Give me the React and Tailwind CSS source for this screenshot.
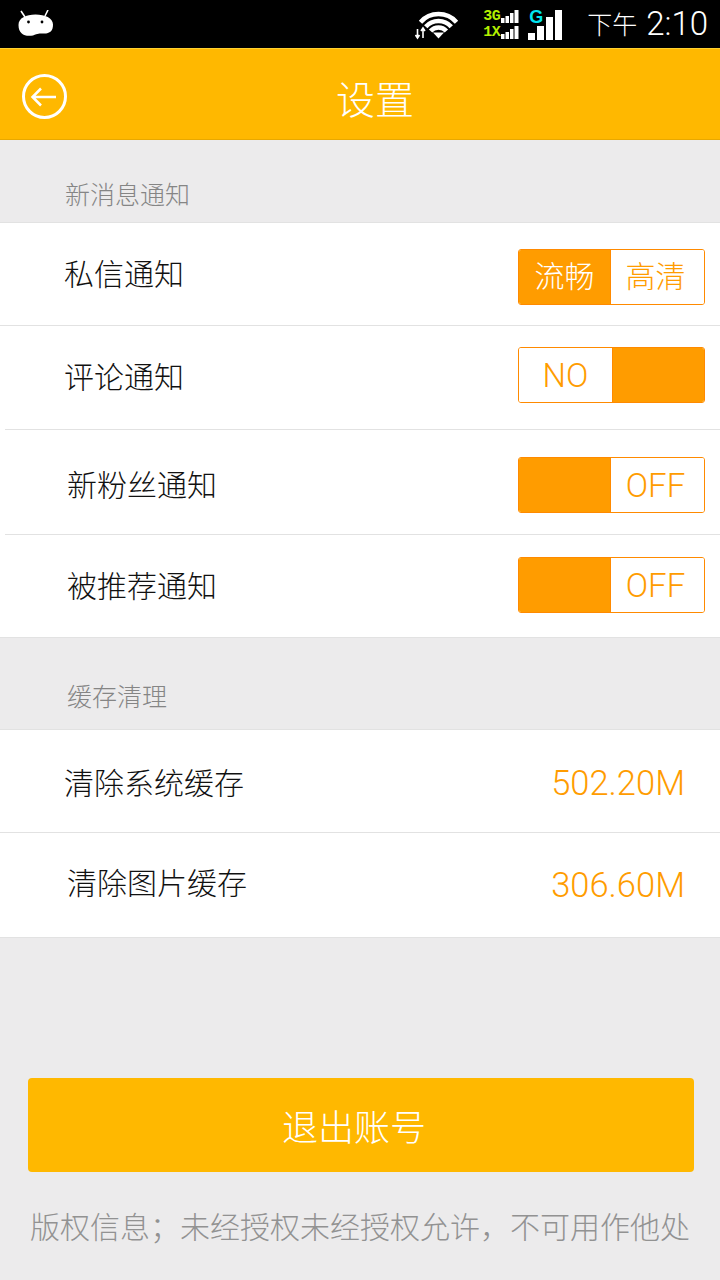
import React from 'react';

const cjk = { fontFamily: '"Noto Sans CJK SC", "Liberation Sans", sans-serif' };
const thin = { fontFamily: 'Roboto, sans-serif', fontWeight: 300 };

function Toggle({ left, right, on, latin, className = '' }) {
  const txt = latin ? 'text-[33px] pt-[2px]' : 'text-[30px] pb-[5px]';
  return (
    <div className={`flex w-[187px] h-[56px] rounded-[3px] border border-[#ff8a00] overflow-hidden font-light ${className}`} style={latin ? thin : undefined}>
      {on === 'left' ? (
        <>
          <div className={`w-[92px] flex items-center justify-center bg-[#ff9c00] text-white border-r border-[#ff8a00] ${txt}`}>{left}</div>
          <div className={`flex-1 flex items-center justify-center bg-white text-[#ff9c00] pr-[4px] ${txt}`}>{right}</div>
        </>
      ) : (
        <>
          <div className={`w-[94px] flex items-center justify-center bg-white text-[#ff9c00] border-r border-[#ff8a00] ${txt}`}>{left}</div>
          <div className="flex-1 bg-[#ff9c00]">{right}</div>
        </>
      )}
    </div>
  );
}

function Row({ label, pl, h, labelClass = '', inset, children }) {
  return (
    <div className={`relative bg-white flex items-center justify-between pr-[15px] ${pl} ${h} ${inset ? '' : 'border-b border-[#e2e2e2]'}`}>
      <span className={`text-[30px] font-light text-[#111] ${labelClass}`}>{label}</span>
      {children}
      {inset && <div className="absolute bottom-0 left-[5px] right-0 h-px bg-[#e2e2e2]" />}
    </div>
  );
}

function SectionTitle({ title, cls }) {
  return (
    <div className={`flex items-end border-b border-[#e2e2e2] ${cls}`}>
      <span className="text-[25px] leading-[32px] font-light text-[#858585]">{title}</span>
    </div>
  );
}

function StatusBar() {
  return (
    <div className="h-[48px] bg-black flex items-center">
      {/* android 头像 */}
      <svg className="ml-[18px]" width="36" height="28" viewBox="0 0 36 28">
        <path d="M3 1 L7 7 M30 0 L27 6" stroke="#fff" strokeWidth="1.6" />
        <path d="M0.500 15 C0.500 8 8 4.500 17.500 4.500 C27 4.500 35 8 35 14.500 C35 21 32 23.500 26 23.500 C21 23.500 20 23.500 15 25.500 C7 27 0.500 24 0.500 15 Z" fill="#fff" />
        <circle cx="10.500" cy="12" r="1.400" fill="#000" />
        <circle cx="24" cy="12" r="1.400" fill="#000" />
      </svg>
      <div className="ml-auto flex items-center h-full">
        <svg width="44" height="30" viewBox="0 0 44 30" className="mt-[2px]">
          <g fill="none" stroke="#fff" strokeWidth="4.500">
            <path d="M5.500 12.200 A24 24 0 0 1 41.500 12.200" />
            <path d="M10.750 16.800 A17 17 0 0 1 36.250 16.800" />
            <path d="M15.600 21 A10.500 10.500 0 0 1 31.400 21" />
          </g>
          <path d="M18 22.500 L29 22.500 L23.500 28.500 Z" fill="#fff" />
          <path d="M2.500 19 V28 M0.500 25 L2.500 28 L4.500 25 M8 18 V28 M6 21 L8 18 L10 21" fill="none" stroke="#fff" strokeWidth="1.600" />
        </svg>
        <div className="flex flex-col w-[36px] h-[30px] ml-[24px] justify-between">
          {['3G', '1X'].map(t => (
            <div key={t} className="flex items-end h-[14px]">
              <span className="text-[15px] leading-[14px] font-bold tracking-[-0.5px] text-[#b4f000] w-[18px] translate-y-[1px]" style={{ fontFamily: '"Liberation Mono", monospace' }}>{t}</span>
              <svg width="18" height="14" viewBox="0 0 18 14">
                <path d="M0 9h3.500v5H0zM4.500 7h3.500v7H4.500zM9 4h3.500v10H9zM13.500 1h4v13h-4z" fill="#fff" />
              </svg>
            </div>
          ))}
        </div>
        <div className="relative w-[34px] h-[30px] ml-[9px] mt-[2px]">
          <span className="absolute left-[1px] top-[-2px] text-[18px] leading-[18px] font-bold text-[#00e6f0]" style={{ fontFamily: '"Liberation Sans", sans-serif' }}>G</span>
          <svg className="absolute left-0 top-0" width="34" height="30" viewBox="0 0 34 30">
            <path d="M0 23h7v7H0zM9 16h7v14H9zM18 7h7v23h-7zM27 0h7v30h-7z" fill="#fff" />
          </svg>
        </div>
        <span className="text-[25px] font-light text-white ml-[25px] mr-[9px]" style={cjk}>下午</span>
        <span className="text-[33px] text-white mr-[12px]" style={thin}>2:10</span>
      </div>
    </div>
  );
}

export default function App() {
  return (
    <div className="w-[720px] h-[1280px] bg-[#ecebec] overflow-hidden" style={cjk}>
      <StatusBar />

      <div className="relative h-[92px] bg-[#ffb800] border-t border-b border-t-[#ffd230] border-b-[#e8a800] flex items-center justify-center">
        <svg className="absolute left-[22px] top-[25px]" width="46" height="46" viewBox="0 0 46 46" fill="none" stroke="#fff" strokeWidth="3">
          <circle cx="22.500" cy="22.500" r="21" />
          <path d="M34 23H11M19 14.500L10.500 23L19 31.500" strokeWidth="2.500" />
        </svg>
        <span className="text-[39px] font-light text-white ml-[30px] mt-[6px]">设置</span>
      </div>

      <SectionTitle title="新消息通知" cls="pl-[65px] h-[83px] pb-[13px]" />
      <Row label="私信通知" pl="pl-[64px]" h="h-[103px]" labelClass="mb-[4px]">
        <Toggle left="流畅" right="高清" on="left" className="mt-[6px]" />
      </Row>
      <Row label="评论通知" pl="pl-[64px]" h="h-[104px]" labelClass="mb-[6px]" inset>
        <Toggle left="NO" right="" on="right" latin className="mb-[6px]" />
      </Row>
      <Row label="新粉丝通知" pl="pl-[67px]" h="h-[105px]" labelClass="mt-[2px]" inset>
        <Toggle left="" right="OFF" on="left" latin className="mt-[4px]" />
      </Row>
      <Row label="被推荐通知" pl="pl-[67px]" h="h-[103px]" labelClass="mb-[4px]">
        <Toggle left="" right="OFF" on="left" latin className="mb-[2px]" />
      </Row>

      <SectionTitle title="缓存清理" cls="pl-[67px] h-[92px] pb-[18px]" />
      <Row label="清除系统缓存" pl="pl-[64px]" h="h-[103px]">
        <span className="text-[34.5px] text-[#ff9c00] mr-[20px] mt-[6px]" style={thin}>502.20M</span>
      </Row>
      <Row label="清除图片缓存" pl="pl-[67px]" h="h-[105px]" labelClass="mb-[8px]">
        <span className="text-[34.5px] text-[#ff9c00] mr-[20px] mt-[2px]" style={thin}>306.60M</span>
      </Row>

      <div className="pl-[28px] pr-[26px] pt-[140px]">
        <button className="w-full h-[94px] pr-[14px] rounded-[4px] bg-[#ffb800] text-white text-[36px] font-light">退出账号</button>
      </div>
      <p className="mt-[31px] text-center text-[30px] leading-[44px] font-light text-[#929292] whitespace-nowrap">
        版权信息；未经授权未经授权允许，不可用作他处
      </p>
    </div>
  );
}
